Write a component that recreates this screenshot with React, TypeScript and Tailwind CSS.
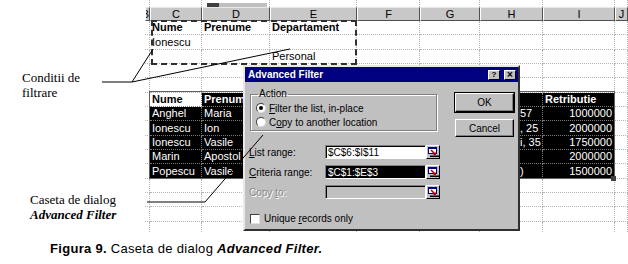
import React from "react";

const COLS = [5, 52, 68, 87, 63, 60, 63, 72, 13];
const LETTERS = ["B", "C", "D", "E", "F", "G", "H", "I", "J"];

type C = { t?: string; b?: boolean; r?: boolean; pl?: boolean };

const empty: C[] = COLS.map(() => ({}));

const rows: { cells: C[]; dark?: boolean; head?: boolean }[] = [
  { cells: [{}, { t: "Nume", b: true }, { t: "Prenume", b: true }, { t: "Departament", b: true }, {}, {}, {}, {}, {}] },
  { cells: [{}, { t: "Ionescu" }, {}, {}, {}, {}, {}, {}, {}] },
  { cells: [{}, {}, {}, { t: "Personal" }, {}, {}, {}, {}, {}] },
  { cells: empty },
  { cells: empty },
  {
    dark: true,
    head: true,
    cells: [{}, { t: "Nume", b: true }, { t: "Prenume", b: true }, {}, {}, {}, {}, { t: "Retributie", b: true }, {}],
  },
  { dark: true, cells: [{}, { t: "Anghel" }, { t: "Maria" }, {}, {}, {}, { t: "57", pl: true }, { t: "1000000", r: true }, {}] },
  { dark: true, cells: [{}, { t: "Ionescu" }, { t: "Ion" }, {}, {}, {}, { t: ", 25", pl: true }, { t: "2000000", r: true }, {}] },
  { dark: true, cells: [{}, { t: "Ionescu" }, { t: "Vasile" }, {}, {}, {}, { t: "i, 35", pl: true }, { t: "1750000", r: true }, {}] },
  { dark: true, cells: [{}, { t: "Marin" }, { t: "Apostol" }, {}, {}, {}, {}, { t: "2000000", r: true }, {}] },
  { dark: true, cells: [{}, { t: "Popescu" }, { t: "Vasile" }, {}, {}, {}, { t: ")", pl: true }, { t: "1500000", r: true }, {}] },
  { cells: empty },
  { cells: empty },
  { cells: empty },
  { cells: empty },
];

function SheetRow({ cells, dark, head }: { cells: C[]; dark?: boolean; head?: boolean }) {
  return (
    <div className="flex h-[14.33px] shrink-0">
      {cells.map((c, i) => {
        const inSel = dark && i >= 1 && i <= 7;
        const active = head && i === 1;
        let cls =
          "shrink-0 h-full overflow-hidden whitespace-nowrap flex items-center px-[2px] border-r border-b border-dotted ";
        if (inSel && !active) cls += "bg-black text-white border-[#7a7a7a] ";
        else if (active) cls += "bg-white text-black border-[#7a7a7a] ";
        else cls += "bg-white text-black border-[#b4b4b4] ";
        if (c.b) cls += "font-bold ";
        if (c.r) cls += "justify-end ";
        if (c.pl) cls += "pl-[40px] ";
        return (
          <div key={i} className={cls} style={{ width: COLS[i] }}>
            {c.t}
          </div>
        );
      })}
    </div>
  );
}

function CollapseIcon() {
  return (
    <div className="w-[14px] h-[14px] shrink-0 bg-[#c0c0c0] border border-t-white border-l-white border-r-black border-b-black flex items-center justify-center">
      <svg width="11" height="10" viewBox="0 0 11 10">
        <rect x="0.5" y="0.5" width="8" height="6" fill="#fff" stroke="#000080" />
        <rect x="0" y="0" width="9" height="2" fill="#000080" />
        <path d="M3 3 L7 7" stroke="#c00000" strokeWidth="1.6" />
        <path d="M5 8 L8 8 L8 5 Z" fill="#c00000" />
        <rect x="2" y="8.5" width="9" height="1.5" fill="#000" />
      </svg>
    </div>
  );
}

function RangeRow({
  label,
  value,
  selected,
  disabled,
}: {
  label: React.ReactNode;
  value?: string;
  selected?: boolean;
  disabled?: boolean;
}) {
  return (
    <div className="flex items-center h-[14px]">
      <div
        className={
          "w-[76px] shrink-0 " +
          (disabled ? "text-[#8a8a8a] [text-shadow:1px_1px_0_#fff]" : "text-black")
        }
      >
        {label}
      </div>
      <div
        className={
          "w-[101px] h-[14px] shrink-0 border border-t-[#808080] border-l-[#808080] border-r-white border-b-white shadow-[inset_1px_1px_0_#000] flex items-center px-[2px] " +
          (disabled ? "bg-[#c0c0c0]" : selected ? "bg-black text-white" : "bg-white text-black")
        }
      >
        {value}
      </div>
      <CollapseIcon />
    </div>
  );
}

function Radio({ checked }: { checked?: boolean }) {
  return (
    <div className="w-[10px] h-[10px] rounded-full bg-white border border-t-[#404040] border-l-[#404040] border-r-[#e0e0e0] border-b-[#e0e0e0] flex items-center justify-center shrink-0">
      {checked && <div className="w-[4px] h-[4px] rounded-full bg-black" />}
    </div>
  );
}

function Dialog() {
  return (
    <div className="absolute left-[243px] top-[65px] w-[277px] h-[166px] bg-[#c0c0c0] border-2 border-t-[#e8e8e8] border-l-[#e8e8e8] border-r-[#303030] border-b-[#303030] text-[10px] [font-family:'Liberation_Sans',Arial,sans-serif] flex flex-col">
      <div className="h-[15px] bg-[#000080] flex items-center justify-between pl-[3px] pr-[2px] shrink-0">
        <span className="text-white font-bold text-[10px]">Advanced Filter</span>
        <div className="flex gap-[4px]">
          <div className="w-[12px] h-[10px] bg-[#c0c0c0] border border-t-white border-l-white border-r-black border-b-black flex items-center justify-center text-[8px] font-bold leading-none">
            ?
          </div>
          <div className="w-[12px] h-[10px] bg-[#c0c0c0] border border-t-white border-l-white border-r-black border-b-black flex items-center justify-center text-[10px] font-bold leading-none">
            ×
          </div>
        </div>
      </div>
      <div className="flex flex-col px-[4px] pt-[7px]">
        <div className="flex items-start">
          <fieldset className="ml-[1px] w-[191px] h-[42px] border border-[#808080] shadow-[1px_1px_0_#fff,inset_1px_1px_0_#fff] px-[5px]">
            <legend className="px-[1px] ml-[2px] leading-[10px]">Action</legend>
            <div className="flex items-center gap-[3px] h-[14px] mt-[2px]">
              <Radio checked />
              <span>
                <u>F</u>ilter the list, in-place
              </span>
            </div>
            <div className="flex items-center gap-[3px] h-[14px]">
              <Radio />
              <span>
                C<u>o</u>py to another location
              </span>
            </div>
          </fieldset>
          <div className="ml-[18px] mt-[4px] flex flex-col gap-[7px]">
            <div className="w-[59px] h-[19px] border border-t-white border-l-white border-r-black border-b-black shadow-[inset_-1px_-1px_0_#808080] flex items-center justify-center outline outline-1 outline-black">
              OK
            </div>
            <div className="w-[59px] h-[18px] border border-t-white border-l-white border-r-black border-b-black shadow-[inset_-1px_-1px_0_#808080] flex items-center justify-center">
              Cancel
            </div>
          </div>
        </div>
        <div className="flex flex-col gap-[6px] mt-[8px]">
          <RangeRow
            label={
              <>
                <u>L</u>ist range:
              </>
            }
            value="$C$6:$I$11"
          />
          <RangeRow
            label={
              <>
                <u>C</u>riteria range:
              </>
            }
            value="$C$1:$E$3"
            selected
          />
          <RangeRow
            label={
              <>
                Copy <u>t</u>o:
              </>
            }
            disabled
          />
        </div>
        <div className="flex items-center gap-[4px] mt-[12px] ml-[1px]">
          <div className="w-[10px] h-[10px] bg-white border border-t-[#404040] border-l-[#404040] border-r-[#e0e0e0] border-b-[#e0e0e0]" />
          <span>
            Unique <u>r</u>ecords only
          </span>
        </div>
      </div>
    </div>
  );
}

export default function App() {
  return (
    <div className="relative w-[628px] h-[264px] bg-white overflow-hidden">
      <div className="flex h-[232px]">
        {/* left annotations */}
        <div className="w-[145px] shrink-0 flex flex-col pt-[70px] pl-[22px] text-[13px] leading-[15px] text-black [font-family:'Liberation_Serif','Times_New_Roman',serif]">
          <div>Conditii de</div>
          <div>filtrare</div>
          <div className="mt-[92px] ml-[8px]">Caseta de dialog</div>
          <div className="ml-[8px] font-bold italic">Advanced Filter</div>
        </div>
        {/* spreadsheet */}
        <div className="flex-1 flex flex-col overflow-hidden text-[11px] [font-family:'Liberation_Sans',Arial,sans-serif]">
          <div className="flex h-[7px] shrink-0">
            {COLS.map((w, i) => (
              <div key={i} className="h-full shrink-0 border-r border-dotted border-[#b4b4b4] bg-white" style={{ width: w }} />
            ))}
          </div>
          <div className="flex h-[14px] shrink-0">
            {COLS.map((w, i) => (
              <div
                key={i}
                className={
                  "h-full shrink-0 bg-[#c8c8c8] border-r border-b border-r-[#505050] border-b-[#505050] border-l border-l-white border-t border-t-[#e8e8e8] flex items-center overflow-hidden leading-none " +
                  (i === 0 ? "justify-end" : "justify-center")
                }
                style={{ width: w }}
              >
                <span className="shrink-0">{LETTERS[i]}</span>
              </div>
            ))}
          </div>
          {rows.map((r, i) => (
            <SheetRow key={i} cells={r.cells} dark={r.dark} head={r.head} />
          ))}
        </div>
      </div>

      <div className="mt-[9px] pl-[50px] text-[13px] tracking-[0.3px] leading-[16px] text-black [font-family:'Liberation_Sans',Arial,sans-serif]">
        <span className="font-bold">Figura 9.</span> Caseta de dialog{" "}
        <span className="font-bold italic">Advanced Filter.</span>
      </div>

      {/* toolbar tab remnant */}
      <div className="absolute left-[207px] top-[3px] w-[60px] h-[4px] flex">
        <div className="w-[12px] h-full bg-[#404040]" />
        <div className="flex-1 h-full bg-[#c0c0c0]" />
      </div>

      {/* criteria marching ants */}
      <div className="absolute left-[151px] top-[20px] w-[206px] h-[45px] border-2 border-dashed border-[#303030]" />

      {/* table selection outline + fill handle */}
      <div className="absolute left-[149px] top-[91px] w-[466px] h-[88px] border border-[#606060]" />
      <div className="absolute left-[611px] top-[176px] w-[5px] h-[5px] bg-[#404040]" />

      <Dialog />

      {/* callout lines */}
      <svg className="absolute left-0 top-0 pointer-events-none" width="628" height="264">
        <path d="M102 82 L132 82 L153 49" stroke="#000" strokeWidth="1" fill="none" />
        <path d="M132 82 L290 49" stroke="#000" strokeWidth="1" fill="none" />
        <path d="M147 202 L205 202 L263 135" stroke="#000" strokeWidth="1" fill="none" />
      </svg>
    </div>
  );
}
